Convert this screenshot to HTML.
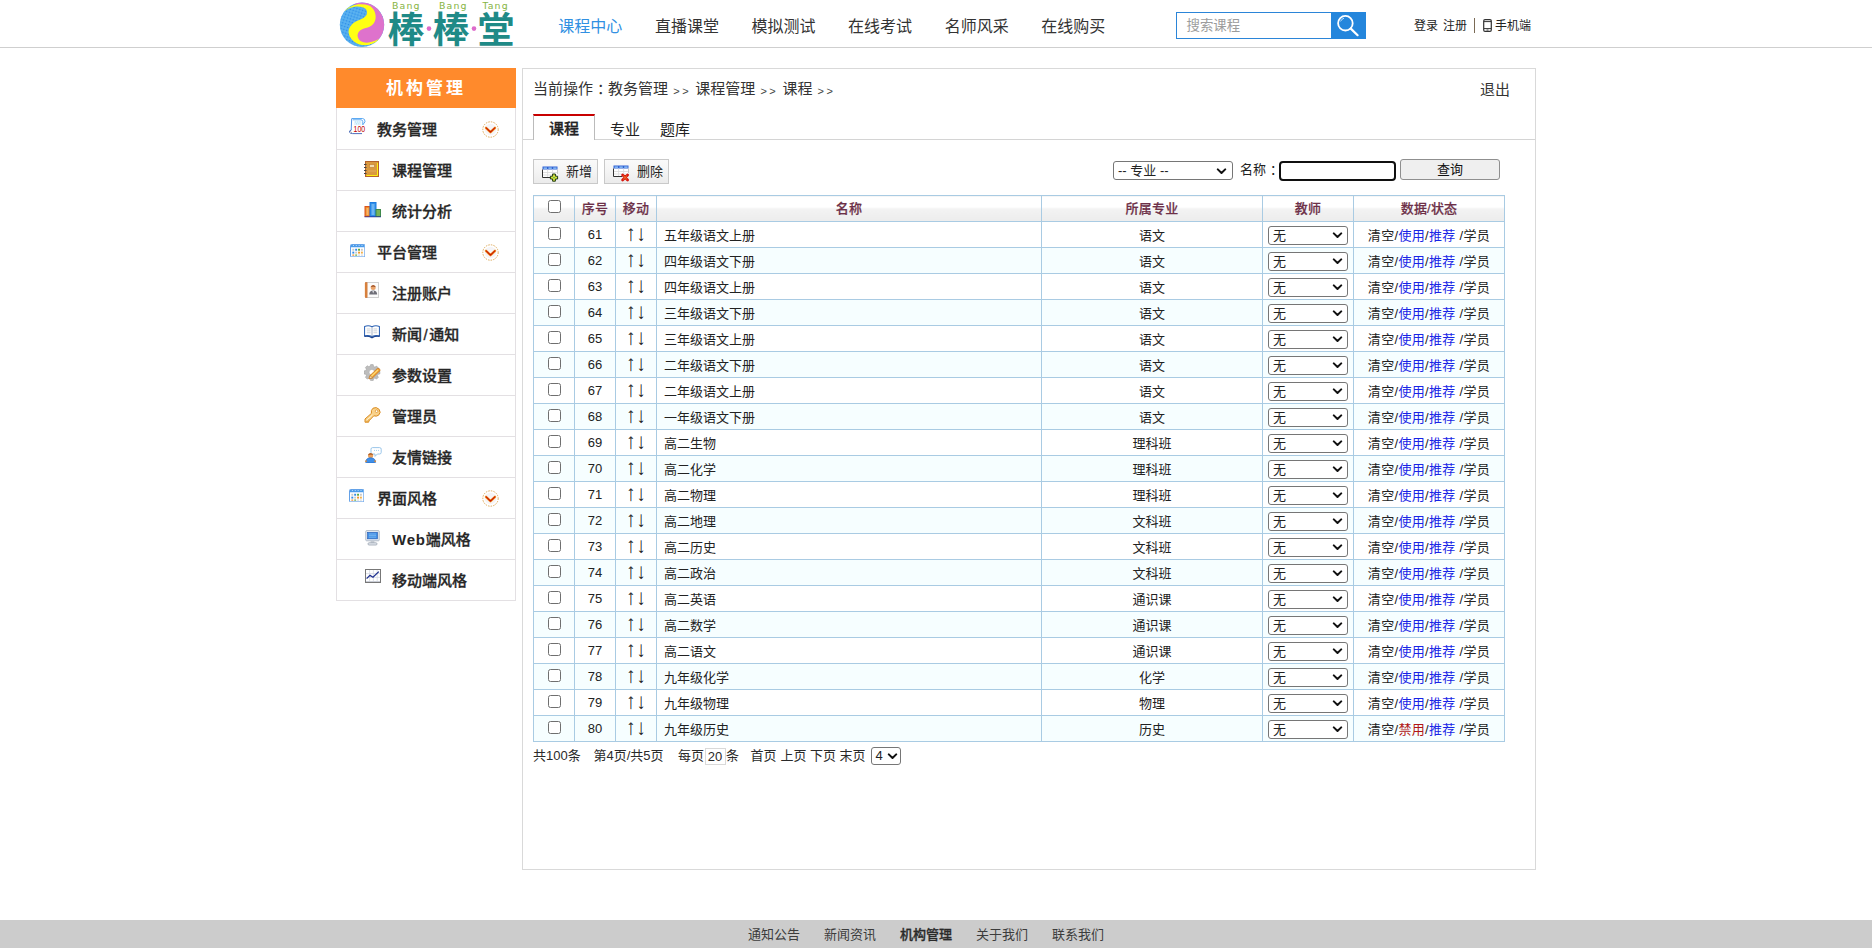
<!DOCTYPE html>
<html lang="zh-CN">
<head>
<meta charset="utf-8">
<title>机构管理 - 课程</title>
<style>
*{box-sizing:border-box;}
html,body{margin:0;padding:0;}
body{width:1872px;height:948px;overflow:hidden;background:#fff;color:#222;font-family:"Liberation Sans","Noto Sans CJK SC",sans-serif;font-size:13px;position:relative;}
a{color:inherit;text-decoration:none;}
ul{list-style:none;margin:0;padding:0;}
/* header */
#hd{position:absolute;left:0;top:0;width:1872px;height:48px;border-bottom:1px solid #cfcfcf;background:#fff;}
#hd .in{position:absolute;left:336px;top:0;width:1200px;height:47px;}
#logo{position:absolute;left:0;top:0;width:182px;height:47px;}
#nav{position:absolute;left:206px;top:0;height:47px;}
#nav li{float:left;width:96.6px;text-align:center;font-size:16px;line-height:53px;color:#333;white-space:nowrap;}
#nav li.on{color:#3190e2;}
#search{position:absolute;left:840px;top:12px;width:190px;height:27px;}
#search .ipt{position:absolute;left:0;top:0;width:156px;height:27px;border:1px solid #2b85d8;background:#fff;font-size:13.400px;color:#9c9c9c;line-height:26px;padding-left:9.500px;}
#search .btn{position:absolute;left:155px;top:0;width:35px;height:27px;background:#2486dc;}
#ulinks{position:absolute;left:1078px;top:18px;font-size:12px;color:#222;white-space:nowrap;line-height:16px;height:16px;}
#ulinks span{position:absolute;top:0;}
#ulinks i{position:absolute;left:60px;top:0;width:1px;height:15px;background:#7a6a55;}
/* sidebar */
#side{position:absolute;left:336px;top:68px;width:180px;}
#side h2{margin:0;height:40px;background:#ff8a2c;color:#fff;font-size:17px;line-height:42px;text-align:center;letter-spacing:3px;font-weight:bold;}
#side ul{border-left:1px solid #e3e0e3;border-right:1px solid #e3e0e3;padding-top:1px;}
#side li{height:41px;border-bottom:1px solid #e3e0e3;font-size:15px;font-weight:500;-webkit-text-stroke:.3px #262626;color:#262626;line-height:41px;white-space:nowrap;}
#side li.g{padding-left:40px;}
#side li.s{padding-left:55px;}
#side .ic{position:absolute;line-height:0;}
#side .ic svg{display:block;}
#side .w{letter-spacing:.8px;font-weight:bold;-webkit-text-stroke:0;}
#side .sl{padding:0 1.500px;}
/* main */
#main{position:absolute;left:522px;top:68px;width:1014px;height:802px;border:1px solid #d9d9d9;background:#fff;}
#crumb{position:absolute;left:10px;top:10px;font-size:15px;color:#333;line-height:20px;white-space:nowrap;}
#crumb i{font-style:normal;font-size:11px;letter-spacing:2.500px;color:#444;position:relative;top:1px;margin-left:1px;}
#exit{position:absolute;left:957px;top:10.500px;font-size:15px;color:#333;line-height:20px;}
#tabline{position:absolute;left:0;top:70px;width:1012px;height:1px;background:#d4d4d4;}
#tabs{position:absolute;left:10px;top:45px;height:26px;font-size:15px;color:#222;}
#tabs .t{position:absolute;top:0;height:26px;line-height:32px;white-space:nowrap;}
#tabs .on{left:0;width:62px;border:1px solid #bbb;border-top:2px solid #c80000;border-bottom:none;background:#fff;text-align:center;font-weight:500;-webkit-text-stroke:.3px #222;line-height:25px;}
/* toolbar */
.tb{position:absolute;top:90px;height:25px;border:1px solid #c9c9c9;background:linear-gradient(#fafafa,#f4f4f4 50%,#ebebeb);font-size:13px;line-height:24px;color:#222;white-space:nowrap;}
.tb svg{position:absolute;}
.tb span{position:absolute;left:32px;top:0;}
.lbl{position:absolute;font-size:13px;color:#222;line-height:20px;white-space:nowrap;}
.inp{position:absolute;border:2px solid #101010;border-radius:4px;background:#fff;}
.qb{position:absolute;border:1px solid #8f8f8f;border-radius:3px;background:#efefef;font-size:13px;color:#111;text-align:center;line-height:19px;}
.sel{position:absolute;border:1px solid #767676;border-radius:3px;background:#fff;font-size:13px;color:#222;white-space:nowrap;}
.sel svg{position:absolute;right:4px;}
/* table */
#tbl{position:absolute;left:10px;top:126px;width:972px;border-collapse:collapse;table-layout:fixed;font-size:13px;color:#222;}
#tbl th,#tbl td{border:1px solid #a9cbe3;padding:0;height:26px;text-align:center;white-space:nowrap;overflow:hidden;}
#tbl th{color:#6d3048;font-weight:500;-webkit-text-stroke:.2px #6d3048;letter-spacing:.2px;background:linear-gradient(#fff 0%,#fff 42%,#f3f3f3 50%,#ececec 100%);height:26px;padding-bottom:2px;}
#tbl tr.e td{background:#f6feff;}
#tbl td.n{text-align:left;padding-left:7px;}
.cb{display:inline-block;width:13px;height:13px;border:1px solid #6f6f6f;border-radius:2.5px;background:#fff;vertical-align:middle;position:relative;top:-2px;}
.ts{display:inline-block;position:relative;top:1px;width:80px;height:19px;border:1px solid #767676;border-radius:3px;background:#fff;text-align:left;padding-left:4px;line-height:17px;vertical-align:middle;}
.ts svg{position:absolute;right:4px;top:5px;}
.bl{color:#1824e6;}
.rd{color:#b01515;}
.co{font-weight:normal;position:relative;left:4px;}
#tbl td.op{letter-spacing:.32px;}
#tbl td.mv{font-family:"NanumGothic","Liberation Sans",sans-serif;font-size:12.500px;letter-spacing:4.500px;padding-left:4.500px;-webkit-text-stroke:.4px #222;line-height:20px;}
/* pager */
#pager{position:absolute;left:0;top:677px;width:600px;height:20px;font-size:13px;color:#2a2a2a;line-height:20px;white-space:nowrap;}
#pager span{position:absolute;top:0;}
#pager .pi{top:1.500px;width:21px;height:17.500px;border:1px solid #d9d9d9;line-height:16px;text-align:center;background:#fff;}
/* footer */
#ft{position:absolute;left:0;top:920px;width:1872px;height:28px;background:#ccc;font-size:13px;color:#3c3c3c;white-space:nowrap;}
#ft span{position:absolute;top:5px;line-height:20px;}
#ft b{color:#2a2a2a;font-weight:500;-webkit-text-stroke:.3px #2a2a2a;}
</style>
</head>
<body>
<div id="hd"><div class="in">
<div id="logo"><svg width="190" height="48" viewBox="0 0 190 48" style="position:absolute;left:0;top:0">
<defs><pattern id="dots" width="3" height="3" patternUnits="userSpaceOnUse" patternTransform="rotate(18)"><rect width="3" height="3" fill="#5ab2f0"/><circle cx="1.5" cy="1.5" r=".85" fill="#2a8ce8"/></pattern></defs>
<circle cx="26" cy="24.7" r="22.2" fill="url(#dots)"/>
<path d="M17 4.5 A22.2 22.2 0 0 1 43 39 L36 43.5 L27 44 L17 38 L17 28 L30 22 L35 12 L28 5.5 Z" fill="#de72cc"/>
<path d="M8.5 11.5 C13 5,24 2.5,33 5.5 C38 8,40.5 14,39.5 19 C38.500 25,33 27.500,28 28.500 C23 30,21 33.500,21.800 37 C23 41.500,28 43.500,34 42.300 C38 41.500,41 40,43 39 C40 42.500,35 45,29 45.300 C22 45.500,15 41,12.800 34 C11.500 28,16 23,22 20.500 C27 18.500,31 16.500,31 12.500 C31 8.500,27 6.800,22 6.600 C16 6.500,11.500 9,8.500 11.500Z" fill="#ffff14"/>
<g font-family="'DejaVu Sans','Liberation Sans',sans-serif" font-size="9.400" fill="#86b443" letter-spacing="1.100"><text x="56" y="9">Bang</text><text x="103" y="9">Bang</text><text x="146.500" y="9">Tang</text></g>
<g font-family="'Liberation Sans','Noto Sans CJK SC',sans-serif" font-weight="bold" font-size="36" fill="#1f8a87"><text x="51.500" y="43" textLength="37" lengthAdjust="spacingAndGlyphs">棒</text><text x="96.500" y="43" textLength="37" lengthAdjust="spacingAndGlyphs">棒</text><text x="141.500" y="43" textLength="37" lengthAdjust="spacingAndGlyphs">堂</text></g>
<circle cx="93" cy="28.600" r="2.300" fill="#dd6acb"/><circle cx="138" cy="28.600" r="2.300" fill="#dd6acb"/>
</svg></div>
<ul id="nav"><li class="on">课程中心</li><li>直播课堂</li><li>模拟测试</li><li>在线考试</li><li>名师风采</li><li>在线购买</li></ul>
<div id="search"><div class="ipt">搜索课程</div><div class="btn"><svg width="35" height="27" viewBox="0 0 35 27"><circle cx="14.400" cy="11.200" r="7.300" fill="none" stroke="#fff" stroke-width="1.800"/><path d="M19.800 16.600 L26.600 23.200" stroke="#fff" stroke-width="2.200" stroke-linecap="round"/><path d="M9.600 9.400 A5.200 5.200 0 0 1 13 6.200" fill="none" stroke="#bfe0fa" stroke-width="1"/></svg></div></div>
<div id="ulinks"><span style="left:0">登录</span><span style="left:29px">注册</span><i></i><svg width="9" height="13" viewBox="0 0 9 13" style="position:absolute;left:69px;top:1px"><rect x=".7" y=".7" width="7.600" height="11.600" rx="1.300" fill="#fff" stroke="#333" stroke-width="1.200"/><path d="M1 2.600h7M1 9.600h7" stroke="#333" stroke-width="1"/><path d="M3.500 11h2" stroke="#333" stroke-width=".9"/></svg><span style="left:81px">手机端</span></div>
</div></div>

<div id="side">
<h2>机构管理</h2>
<!--SS--><ul>
<li class="g">教务管理</li>
<li class="s">课程管理</li>
<li class="s">统计分析</li>
<li class="g">平台管理</li>
<li class="s">注册账户</li>
<li class="s">新闻<span class="sl">/</span>通知</li>
<li class="s">参数设置</li>
<li class="s">管理员</li>
<li class="s">友情链接</li>
<li class="g">界面风格</li>
<li class="s"><span class="w">Web</span>端风格</li>
<li class="s">移动端风格</li>
</ul>
<span class="ic" style="left:11.6px;top:48.6px"><svg width="19" height="18" viewBox="0 0 19 18"><path d="M3.800 1.500 H14.600 Q17.200 1.700 17 4.800 L14.800 7.800 V4.600 Q14.700 3 13 2.800 H4.800" fill="#fff" stroke="#4a9ff0" stroke-width=".9" stroke-linejoin="round"/><path d="M3.700 1.600 L3.200 13.200" stroke="#3f86e0" stroke-width=".9"/><path d="M3.300 13 Q.9 13.600 1.500 15.300 Q2.100 16.600 4.600 16.600 H14" fill="none" stroke="#3b5fb4" stroke-width=".9"/><path d="M1.900 14.600 q1.400-.2 2 1.500" fill="none" stroke="#9a9aa2" stroke-width=".8"/><rect x="6.200" y="3.800" width="7.200" height="4.400" fill="#e2f3fc"/><path d="M7 5h1M9.200 5h1M11.400 5h1M8 6.800h1M10.200 6.800h1" stroke="#a8e2fa" stroke-width="1"/><text x="5.600" y="15.200" font-family="'Liberation Sans',sans-serif" font-size="8.800" fill="#c00000" textLength="11.600" lengthAdjust="spacingAndGlyphs">100</text></svg></span>
<span class="ic" style="left:145.5px;top:52.5px"><svg width="17" height="17" viewBox="0 0 17 17"><circle cx="8.500" cy="8.500" r="7.700" fill="#fff" stroke="#d9a04a" stroke-width=".9" stroke-dasharray="1.500 1.100"/><circle cx="8.500" cy="8.500" r="5.800" fill="#f5f4f7"/><path d="M4 6.800 L8.500 11.200 L13 6.800" fill="none" stroke="#f59a2a" stroke-width="2.500" stroke-linecap="round" stroke-linejoin="round"/><path d="M4.200 6.900 L8.500 11.100 L12.800 6.900" fill="none" stroke="#c81a00" stroke-width="1.300" stroke-linecap="round" stroke-linejoin="round"/></svg></span>
<span class="ic" style="left:28.0px;top:93.0px"><svg width="16" height="16" viewBox="0 0 16 16"><rect x="1.5" y="0.5" width="13" height="15" fill="#d9993f" stroke="#b4622a"/><path d="M2.5 14.5 H13.5 V2" fill="none" stroke="#ffee10" stroke-width="1"/><rect x="5.5" y="3.5" width="5" height="3" fill="#f4dcae" stroke="#c07a2c" stroke-width=".6"/><path d="M0 3.5 H2.5 M0 6.5 H2.5 M0 9.5 H2.5 M0 12.5 H2.5" stroke="#444" stroke-width="1"/><path d="M5 9 V11 M7 9 V11 M9 9 V11 M11 9 V11" stroke="#e9b76c" stroke-width=".7"/></svg></span>
<span class="ic" style="left:28.4px;top:133.6px"><svg width="17" height="16" viewBox="0 0 17 16"><rect x="1" y="4.5" width="5" height="10" fill="#f08a24" stroke="#d9531e" stroke-width="1"/><rect x="2.5" y="6" width="2" height="7" fill="#f7b46a"/><rect x="6" y="0.5" width="6" height="14" fill="#2f8fe8" stroke="#1f7be0" stroke-width="1"/><rect x="7.5" y="2" width="3" height="11" fill="#6db4f2"/><rect x="12" y="7.5" width="4.5" height="7" fill="#79b356" stroke="#3f8a4a" stroke-width="1"/><path d="M.5 14.8 H17" stroke="#2a2f9a" stroke-width=".8"/></svg></span>
<span class="ic" style="left:13.6px;top:175.8px"><svg width="15.400" height="13.400" viewBox="0 0 16 14"><rect x=".5" y=".5" width="15" height="13" rx="1" fill="#fff" stroke="#5a9be6"/><rect x="1" y="1" width="14" height="2.4" fill="#4a9bea"/><path d="M3 1.6h1M6 1.6h1M9 1.6h1M12 1.6h1" stroke="#d9ecfb" stroke-width=".9"/><g><rect x="2.4" y="5" width="2" height="2" fill="#c9c9c9"/><rect x="5.4" y="5" width="2" height="2" fill="#2f8be6"/><rect x="8.4" y="5" width="2" height="2" fill="#5aa83a"/><rect x="11.4" y="5" width="2" height="2" fill="#c9c9c9"/><rect x="2.4" y="8" width="2" height="2" fill="#2f8be6"/><rect x="5.4" y="8" width="2" height="2" fill="#c9c9c9"/><rect x="8.4" y="8" width="2" height="2" fill="#f0962a"/><rect x="11.4" y="8" width="2" height="2" fill="#f2b04a"/><rect x="2.4" y="11" width="2" height="1.2" fill="#f0801e"/><rect x="5.4" y="11" width="2" height="1.2" fill="#5aa83a"/><rect x="8.4" y="11" width="2" height="1.2" fill="#d4d4d4"/><rect x="11.4" y="11" width="2" height="1.2" fill="#d4d4d4"/></g></svg></span>
<span class="ic" style="left:145.5px;top:175.5px"><svg width="17" height="17" viewBox="0 0 17 17"><circle cx="8.500" cy="8.500" r="7.700" fill="#fff" stroke="#d9a04a" stroke-width=".9" stroke-dasharray="1.500 1.100"/><circle cx="8.500" cy="8.500" r="5.800" fill="#f5f4f7"/><path d="M4 6.800 L8.500 11.200 L13 6.800" fill="none" stroke="#f59a2a" stroke-width="2.500" stroke-linecap="round" stroke-linejoin="round"/><path d="M4.200 6.900 L8.500 11.100 L12.800 6.900" fill="none" stroke="#c81a00" stroke-width="1.300" stroke-linecap="round" stroke-linejoin="round"/></svg></span>
<span class="ic" style="left:28.0px;top:213.6px"><svg width="16" height="16" viewBox="0 0 16 16"><rect x="2.5" y=".5" width="12" height="15" fill="#fbfbfb" stroke="#cfcfcf"/><rect x="1" y=".3" width="2.4" height="15.4" fill="#c9641e"/><path d="M.4 2h3M.4 4h3M.4 6h3M.4 8h3M.4 10h3M.4 12h3M.4 14h3" stroke="#f1b47a" stroke-width=".7"/><circle cx="9.2" cy="5.6" r="2.5" fill="#e9a36a"/><path d="M6.6 5 Q9.2 1.4 11.8 5 Q9.2 3.8 6.6 5Z" fill="#8a3d1c"/><path d="M5.2 12.4 Q5.4 8.6 9.2 8.6 Q13 8.6 13.2 12.4 Z" fill="#6f6f78"/><path d="M8.4 9 L9.2 11.6 L10 9Z" fill="#e8e8ee"/></svg></span>
<span class="ic" style="left:27.6px;top:257.0px"><svg width="16" height="13.600" viewBox="0 0 17 14"><path d="M.6 1.4 Q4.6 -.2 8.5 1.6 Q12.4 -.2 16.4 1.4 V11.6 Q12.4 10.4 8.5 12 Q4.6 10.4 .6 11.6Z" fill="#fff" stroke="#2c62b4" stroke-width="1.1" stroke-linejoin="round"/><path d="M.5 11.8 Q4.6 11 8.5 13.2 Q12.4 11 16.5 11.8" fill="none" stroke="#1b438f" stroke-width="1.5"/><path d="M8.5 1.8 V12" stroke="#8a9bb6" stroke-width=".8"/><path d="M3 4h4M3 6h4M3 8h4M10 4h4M10 6h4M10 8h4" stroke="#bfc4cc" stroke-width=".8"/></svg></span>
<span class="ic" style="left:27.6px;top:296.4px"><svg width="17" height="17" viewBox="0 0 17 17"><g fill="#bdbdbd" stroke="#9a9a9a" stroke-width=".5"><path d="M6.6 .6h2.6l.4 1.9 1.3.6 1.7-1 1.8 1.8-1 1.7.6 1.3 1.9.4v2.6l-1.9.4-.6 1.3 1 1.7-1.8 1.8-1.7-1-1.3.6-.4 1.9H6.600l-.4-1.9-1.3-.6-1.7 1-1.800-1.800 1-1.700-.6-1.300-1.900-.4V6.900l1.900-.4.6-1.300-1-1.700 1.800-1.800 1.700 1 1.300-.6Z"/></g><circle cx="7.900" cy="8.200" r="2.800" fill="#fff" stroke="#a8a8a8" stroke-width=".5"/><path d="M5 14.800 L6 11.600 L13.400 4.400 Q15.600 3.600 16.200 6.400 L8.600 13.800Z" fill="#f0a23a" stroke="#c87412" stroke-width=".7" stroke-linejoin="round"/><path d="M7 12.600 L14 5.800" stroke="#ffe27a" stroke-width="1.100"/><path d="M5 14.800 L6 11.600 L8.600 13.800Z" fill="#f6deb0" stroke="#b4691a" stroke-width=".5"/></svg></span>
<span class="ic" style="left:27.6px;top:338.8px"><svg width="17" height="16" viewBox="0 0 17 16"><path d="M9 1.200 Q12.400 -.6 15.200 2.400 Q17.400 5.600 14.600 8.200 Q12.400 9.800 9.800 8.800 L5 13.800 L4.600 15.200 H1 V12 L7.400 6.400 Q6.600 3.200 9 1.200Z" fill="#f9d28a" stroke="#d98a1e" stroke-width="1" stroke-linejoin="round"/><path d="M2.400 13.400 L8.400 8" stroke="#fff1c9" stroke-width="1"/><circle cx="12.600" cy="4.200" r="1.300" fill="#fff" stroke="#d98a1e" stroke-width=".7"/><path d="M3 15 v-1.400 M5 13.600 v-1.200" stroke="#d98a1e" stroke-width=".8"/></svg></span>
<span class="ic" style="left:29.4px;top:378.6px"><svg width="17" height="16" viewBox="0 0 17 16"><path d="M7.500 .6 H14.600 Q16.200 .6 16.200 2.200 V5.400 Q16.200 7 14.600 7 H12.400 L10 9.400 V7 H7.500 Q6 7 6 5.400 V2.200 Q6 .6 7.500 .6Z" fill="#fff" stroke="#8fc0e6" stroke-width=".9"/><path d="M9 3.400h1M11 3.400h1M13 3.400h1" stroke="#9fd0f2" stroke-width="1"/><circle cx="5.600" cy="8.600" r="2.600" fill="#e8a05e"/><path d="M2.800 8.200 Q5.400 4.200 8.400 8 Q5.600 6.800 2.800 8.200Z" fill="#9a4a1a"/><path d="M.6 15.400 Q.8 10.800 5.600 10.800 Q10.400 10.800 10.600 15.400 Q5.600 16.600 .6 15.400Z" fill="#3f8fe8" stroke="#2468c4" stroke-width=".6"/><path d="M.2 14.400 l1.600-.4 M11 14.400 l-1.600-.4" stroke="#e98a2a" stroke-width="1.400"/></svg></span>
<span class="ic" style="left:12.6px;top:421.0px"><svg width="15.400" height="13.400" viewBox="0 0 16 14"><rect x=".5" y=".5" width="15" height="13" rx="1" fill="#fff" stroke="#5a9be6"/><rect x="1" y="1" width="14" height="2.4" fill="#4a9bea"/><path d="M3 1.6h1M6 1.6h1M9 1.6h1M12 1.6h1" stroke="#d9ecfb" stroke-width=".9"/><g><rect x="2.4" y="5" width="2" height="2" fill="#c9c9c9"/><rect x="5.4" y="5" width="2" height="2" fill="#2f8be6"/><rect x="8.4" y="5" width="2" height="2" fill="#5aa83a"/><rect x="11.4" y="5" width="2" height="2" fill="#c9c9c9"/><rect x="2.4" y="8" width="2" height="2" fill="#2f8be6"/><rect x="5.4" y="8" width="2" height="2" fill="#c9c9c9"/><rect x="8.4" y="8" width="2" height="2" fill="#f0962a"/><rect x="11.4" y="8" width="2" height="2" fill="#f2b04a"/><rect x="2.4" y="11" width="2" height="1.2" fill="#f0801e"/><rect x="5.4" y="11" width="2" height="1.2" fill="#5aa83a"/><rect x="8.4" y="11" width="2" height="1.2" fill="#d4d4d4"/><rect x="11.4" y="11" width="2" height="1.2" fill="#d4d4d4"/></g></svg></span>
<span class="ic" style="left:145.5px;top:421.5px"><svg width="17" height="17" viewBox="0 0 17 17"><circle cx="8.500" cy="8.500" r="7.700" fill="#fff" stroke="#d9a04a" stroke-width=".9" stroke-dasharray="1.500 1.100"/><circle cx="8.500" cy="8.500" r="5.800" fill="#f5f4f7"/><path d="M4 6.800 L8.500 11.200 L13 6.800" fill="none" stroke="#f59a2a" stroke-width="2.500" stroke-linecap="round" stroke-linejoin="round"/><path d="M4.200 6.900 L8.500 11.100 L12.800 6.900" fill="none" stroke="#c81a00" stroke-width="1.300" stroke-linecap="round" stroke-linejoin="round"/></svg></span>
<span class="ic" style="left:29.4px;top:461.6px"><svg width="15" height="16" viewBox="0 0 15 16"><rect x=".8" y=".6" width="13.400" height="10.200" rx=".8" fill="#e9eef4" stroke="#a9b4c2" stroke-width=".9"/><rect x="2.600" y="2.400" width="9.800" height="6.400" fill="#3f8fe6" stroke="#2b62b8" stroke-width=".7"/><path d="M4 4h7M4 5.600h7M4 7.200h7" stroke="#8cc2f4" stroke-width=".7"/><path d="M5.600 11 h3.800 v2 h-3.800Z" fill="#c4cad2"/><rect x="3" y="12.800" width="9" height="2.200" rx="1" fill="#e4e8ee" stroke="#9aa3b0" stroke-width=".8"/></svg></span>
<span class="ic" style="left:29.0px;top:501.0px"><svg width="16" height="14" viewBox="0 0 16 14"><rect x=".5" y=".5" width="15" height="13" fill="#fff" stroke="#777"/><path d="M1 4.600h14M1 8.400h14M4.600 1v12M8.400 1v12M12.200 1v12" stroke="#d4d9e2" stroke-width=".8"/><path d="M1.600 9.600 L5 6.400 L8 8.200 L13.800 2.600" fill="none" stroke="#1d2f8f" stroke-width="1.300"/><path d="M1 12.500h14" stroke="#c9cdd6" stroke-width="1"/></svg></span><!--SE-->
</div>

<div id="main">
<div id="crumb">当前操作<b class="co">：</b>教务管理 <i>&gt;&gt;</i> 课程管理 <i>&gt;&gt;</i> 课程 <i>&gt;&gt;</i></div>
<div id="exit">退出</div>
<div id="tabline"></div>
<div id="tabs"><div class="t on">课程</div><div class="t" style="left:77px">专业</div><div class="t" style="left:127px">题库</div></div>
<div class="tb" style="left:10px;width:65px"><svg style="left:8px;top:6px" width="17" height="16" viewBox="0 0 17 16"><rect x=".5" y=".5" width="15" height="11" fill="#fff"/><rect x=".5" y=".5" width="15" height="3" fill="#2f5fd2"/><path d="M1.600 2.200h3.400M6.400 2.200h3.400M11.200 2.200h3.400" stroke="#9ad0fb" stroke-width="1.200"/><path d="M1 6.500h14M1 9h14M5.600 3.500v8M10.600 3.500v8" stroke="#d9d9d9" stroke-width=".8"/><path d="M.5 3.500V11.500H9" fill="none" stroke="#333" stroke-width="1"/><path d="M15.500 3.500V8" stroke="#bbb" stroke-width=".8"/><path d="M10.600 8h2.800v2.200h2.200v2.800h-2.200v2.200h-2.800v-2.200h-2.200v-2.800h2.200Z" fill="#d8e23a" stroke="#1e3a14" stroke-width="1" stroke-linejoin="round"/><path d="M11.300 11.600h1.400" stroke="#3fae4a" stroke-width="1.400"/></svg><span>新增</span></div>
<div class="tb" style="left:81px;width:65px"><svg style="left:8px;top:5px" width="17" height="17" viewBox="0 0 17 17"><rect x=".5" y=".5" width="15" height="11" fill="#fff"/><rect x=".5" y=".5" width="15" height="3" fill="#2f5fd2"/><path d="M1.600 2.200h3.400M6.400 2.200h3.400M11.200 2.200h3.400" stroke="#9ad0fb" stroke-width="1.200"/><path d="M1 6.500h14M1 9h14M5.600 3.500v8M10.600 3.500v8" stroke="#d9d9d9" stroke-width=".8"/><path d="M.5 3.500V11.500H9" fill="none" stroke="#333" stroke-width="1"/><path d="M15.500 3.500V8" stroke="#bbb" stroke-width=".8"/><path d="M9.600 10 L14.600 15 M14.600 10 L9.600 15" stroke="#d81a10" stroke-width="2.800" stroke-linecap="round"/><path d="M10.600 11 L13.600 14 M13.600 11 L10.600 14" stroke="#f5822a" stroke-width="1" stroke-linecap="round"/></svg><span>删除</span></div>
<div class="sel" style="left:590px;top:92px;width:120px;height:19px;line-height:17px;padding-left:4px">-- 专业 --<svg style="top:5.500px;right:5px" width="11" height="7" viewBox="0 0 11 7"><path d="M1.800 1.400 L5.500 5 L9.200 1.400" fill="none" stroke="#111" stroke-width="2" stroke-linecap="round" stroke-linejoin="round"/></svg></div>
<div class="lbl" style="left:717px;top:91px">名称<b class="co">：</b></div>
<div class="inp" style="left:756px;top:92px;width:117px;height:20px"></div>
<div class="qb" style="left:877px;top:90px;width:100px;height:21px">查询</div>
<!--TS--><table id="tbl"><colgroup><col style="width:41px"><col style="width:41px"><col style="width:41px"><col style="width:385px"><col style="width:221px"><col style="width:91px"><col style="width:151px"></colgroup>
<tr><th><span class="cb"></span></th><th>序号</th><th>移动</th><th>名称</th><th>所属专业</th><th>教师</th><th>数据/状态</th></tr>
<tr><td><span class="cb"></span></td><td>61</td><td class="mv">↑↓</td><td class="n">五年级语文上册</td><td>语文</td><td><span class="ts">无<svg width="11" height="7" viewBox="0 0 11 7"><path d="M1.800 1.400 L5.500 5 L9.200 1.400" fill="none" stroke="#111" stroke-width="2" stroke-linecap="round" stroke-linejoin="round"/></svg></span></td><td class="op">清空/<span class="bl">使用</span>/<span class="bl">推荐</span> /学员</td></tr>
<tr class="e"><td><span class="cb"></span></td><td>62</td><td class="mv">↑↓</td><td class="n">四年级语文下册</td><td>语文</td><td><span class="ts">无<svg width="11" height="7" viewBox="0 0 11 7"><path d="M1.800 1.400 L5.500 5 L9.200 1.400" fill="none" stroke="#111" stroke-width="2" stroke-linecap="round" stroke-linejoin="round"/></svg></span></td><td class="op">清空/<span class="bl">使用</span>/<span class="bl">推荐</span> /学员</td></tr>
<tr><td><span class="cb"></span></td><td>63</td><td class="mv">↑↓</td><td class="n">四年级语文上册</td><td>语文</td><td><span class="ts">无<svg width="11" height="7" viewBox="0 0 11 7"><path d="M1.800 1.400 L5.500 5 L9.200 1.400" fill="none" stroke="#111" stroke-width="2" stroke-linecap="round" stroke-linejoin="round"/></svg></span></td><td class="op">清空/<span class="bl">使用</span>/<span class="bl">推荐</span> /学员</td></tr>
<tr class="e"><td><span class="cb"></span></td><td>64</td><td class="mv">↑↓</td><td class="n">三年级语文下册</td><td>语文</td><td><span class="ts">无<svg width="11" height="7" viewBox="0 0 11 7"><path d="M1.800 1.400 L5.500 5 L9.200 1.400" fill="none" stroke="#111" stroke-width="2" stroke-linecap="round" stroke-linejoin="round"/></svg></span></td><td class="op">清空/<span class="bl">使用</span>/<span class="bl">推荐</span> /学员</td></tr>
<tr><td><span class="cb"></span></td><td>65</td><td class="mv">↑↓</td><td class="n">三年级语文上册</td><td>语文</td><td><span class="ts">无<svg width="11" height="7" viewBox="0 0 11 7"><path d="M1.800 1.400 L5.500 5 L9.200 1.400" fill="none" stroke="#111" stroke-width="2" stroke-linecap="round" stroke-linejoin="round"/></svg></span></td><td class="op">清空/<span class="bl">使用</span>/<span class="bl">推荐</span> /学员</td></tr>
<tr class="e"><td><span class="cb"></span></td><td>66</td><td class="mv">↑↓</td><td class="n">二年级语文下册</td><td>语文</td><td><span class="ts">无<svg width="11" height="7" viewBox="0 0 11 7"><path d="M1.800 1.400 L5.500 5 L9.200 1.400" fill="none" stroke="#111" stroke-width="2" stroke-linecap="round" stroke-linejoin="round"/></svg></span></td><td class="op">清空/<span class="bl">使用</span>/<span class="bl">推荐</span> /学员</td></tr>
<tr><td><span class="cb"></span></td><td>67</td><td class="mv">↑↓</td><td class="n">二年级语文上册</td><td>语文</td><td><span class="ts">无<svg width="11" height="7" viewBox="0 0 11 7"><path d="M1.800 1.400 L5.500 5 L9.200 1.400" fill="none" stroke="#111" stroke-width="2" stroke-linecap="round" stroke-linejoin="round"/></svg></span></td><td class="op">清空/<span class="bl">使用</span>/<span class="bl">推荐</span> /学员</td></tr>
<tr class="e"><td><span class="cb"></span></td><td>68</td><td class="mv">↑↓</td><td class="n">一年级语文下册</td><td>语文</td><td><span class="ts">无<svg width="11" height="7" viewBox="0 0 11 7"><path d="M1.800 1.400 L5.500 5 L9.200 1.400" fill="none" stroke="#111" stroke-width="2" stroke-linecap="round" stroke-linejoin="round"/></svg></span></td><td class="op">清空/<span class="bl">使用</span>/<span class="bl">推荐</span> /学员</td></tr>
<tr><td><span class="cb"></span></td><td>69</td><td class="mv">↑↓</td><td class="n">高二生物</td><td>理科班</td><td><span class="ts">无<svg width="11" height="7" viewBox="0 0 11 7"><path d="M1.800 1.400 L5.500 5 L9.200 1.400" fill="none" stroke="#111" stroke-width="2" stroke-linecap="round" stroke-linejoin="round"/></svg></span></td><td class="op">清空/<span class="bl">使用</span>/<span class="bl">推荐</span> /学员</td></tr>
<tr class="e"><td><span class="cb"></span></td><td>70</td><td class="mv">↑↓</td><td class="n">高二化学</td><td>理科班</td><td><span class="ts">无<svg width="11" height="7" viewBox="0 0 11 7"><path d="M1.800 1.400 L5.500 5 L9.200 1.400" fill="none" stroke="#111" stroke-width="2" stroke-linecap="round" stroke-linejoin="round"/></svg></span></td><td class="op">清空/<span class="bl">使用</span>/<span class="bl">推荐</span> /学员</td></tr>
<tr><td><span class="cb"></span></td><td>71</td><td class="mv">↑↓</td><td class="n">高二物理</td><td>理科班</td><td><span class="ts">无<svg width="11" height="7" viewBox="0 0 11 7"><path d="M1.800 1.400 L5.500 5 L9.200 1.400" fill="none" stroke="#111" stroke-width="2" stroke-linecap="round" stroke-linejoin="round"/></svg></span></td><td class="op">清空/<span class="bl">使用</span>/<span class="bl">推荐</span> /学员</td></tr>
<tr class="e"><td><span class="cb"></span></td><td>72</td><td class="mv">↑↓</td><td class="n">高二地理</td><td>文科班</td><td><span class="ts">无<svg width="11" height="7" viewBox="0 0 11 7"><path d="M1.800 1.400 L5.500 5 L9.200 1.400" fill="none" stroke="#111" stroke-width="2" stroke-linecap="round" stroke-linejoin="round"/></svg></span></td><td class="op">清空/<span class="bl">使用</span>/<span class="bl">推荐</span> /学员</td></tr>
<tr><td><span class="cb"></span></td><td>73</td><td class="mv">↑↓</td><td class="n">高二历史</td><td>文科班</td><td><span class="ts">无<svg width="11" height="7" viewBox="0 0 11 7"><path d="M1.800 1.400 L5.500 5 L9.200 1.400" fill="none" stroke="#111" stroke-width="2" stroke-linecap="round" stroke-linejoin="round"/></svg></span></td><td class="op">清空/<span class="bl">使用</span>/<span class="bl">推荐</span> /学员</td></tr>
<tr class="e"><td><span class="cb"></span></td><td>74</td><td class="mv">↑↓</td><td class="n">高二政治</td><td>文科班</td><td><span class="ts">无<svg width="11" height="7" viewBox="0 0 11 7"><path d="M1.800 1.400 L5.500 5 L9.200 1.400" fill="none" stroke="#111" stroke-width="2" stroke-linecap="round" stroke-linejoin="round"/></svg></span></td><td class="op">清空/<span class="bl">使用</span>/<span class="bl">推荐</span> /学员</td></tr>
<tr><td><span class="cb"></span></td><td>75</td><td class="mv">↑↓</td><td class="n">高二英语</td><td>通识课</td><td><span class="ts">无<svg width="11" height="7" viewBox="0 0 11 7"><path d="M1.800 1.400 L5.500 5 L9.200 1.400" fill="none" stroke="#111" stroke-width="2" stroke-linecap="round" stroke-linejoin="round"/></svg></span></td><td class="op">清空/<span class="bl">使用</span>/<span class="bl">推荐</span> /学员</td></tr>
<tr class="e"><td><span class="cb"></span></td><td>76</td><td class="mv">↑↓</td><td class="n">高二数学</td><td>通识课</td><td><span class="ts">无<svg width="11" height="7" viewBox="0 0 11 7"><path d="M1.800 1.400 L5.500 5 L9.200 1.400" fill="none" stroke="#111" stroke-width="2" stroke-linecap="round" stroke-linejoin="round"/></svg></span></td><td class="op">清空/<span class="bl">使用</span>/<span class="bl">推荐</span> /学员</td></tr>
<tr><td><span class="cb"></span></td><td>77</td><td class="mv">↑↓</td><td class="n">高二语文</td><td>通识课</td><td><span class="ts">无<svg width="11" height="7" viewBox="0 0 11 7"><path d="M1.800 1.400 L5.500 5 L9.200 1.400" fill="none" stroke="#111" stroke-width="2" stroke-linecap="round" stroke-linejoin="round"/></svg></span></td><td class="op">清空/<span class="bl">使用</span>/<span class="bl">推荐</span> /学员</td></tr>
<tr class="e"><td><span class="cb"></span></td><td>78</td><td class="mv">↑↓</td><td class="n">九年级化学</td><td>化学</td><td><span class="ts">无<svg width="11" height="7" viewBox="0 0 11 7"><path d="M1.800 1.400 L5.500 5 L9.200 1.400" fill="none" stroke="#111" stroke-width="2" stroke-linecap="round" stroke-linejoin="round"/></svg></span></td><td class="op">清空/<span class="bl">使用</span>/<span class="bl">推荐</span> /学员</td></tr>
<tr><td><span class="cb"></span></td><td>79</td><td class="mv">↑↓</td><td class="n">九年级物理</td><td>物理</td><td><span class="ts">无<svg width="11" height="7" viewBox="0 0 11 7"><path d="M1.800 1.400 L5.500 5 L9.200 1.400" fill="none" stroke="#111" stroke-width="2" stroke-linecap="round" stroke-linejoin="round"/></svg></span></td><td class="op">清空/<span class="bl">使用</span>/<span class="bl">推荐</span> /学员</td></tr>
<tr class="e"><td><span class="cb"></span></td><td>80</td><td class="mv">↑↓</td><td class="n">九年级历史</td><td>历史</td><td><span class="ts">无<svg width="11" height="7" viewBox="0 0 11 7"><path d="M1.800 1.400 L5.500 5 L9.200 1.400" fill="none" stroke="#111" stroke-width="2" stroke-linecap="round" stroke-linejoin="round"/></svg></span></td><td class="op">清空/<span class="rd">禁用</span>/<span class="bl">推荐</span> /学员</td></tr>
</table><!--TE-->
<div id="pager"><span style="left:10px">共100条</span><span style="left:70.500px">第4页/共5页</span><span style="left:155px">每页</span><span class="pi" style="left:181.500px">20</span><span style="left:203px">条</span><span style="left:227.500px">首页</span><span style="left:257.500px">上页</span><span style="left:287px">下页</span><span style="left:316.500px">末页</span><div class="sel" style="left:348px;top:1px;width:30px;height:18px;line-height:16px;padding-left:3.500px">4<svg style="top:5px;right:2.500px" width="11" height="7" viewBox="0 0 11 7"><path d="M1.800 1.400 L5.500 5 L9.200 1.400" fill="none" stroke="#111" stroke-width="2" stroke-linecap="round" stroke-linejoin="round"/></svg></div></div>
</div>

<div id="ft"><span style="left:748px">通知公告</span><span style="left:824px">新闻资讯</span><span style="left:900px"><b>机构管理</b></span><span style="left:976px">关于我们</span><span style="left:1052px">联系我们</span></div>
</body>
</html>
